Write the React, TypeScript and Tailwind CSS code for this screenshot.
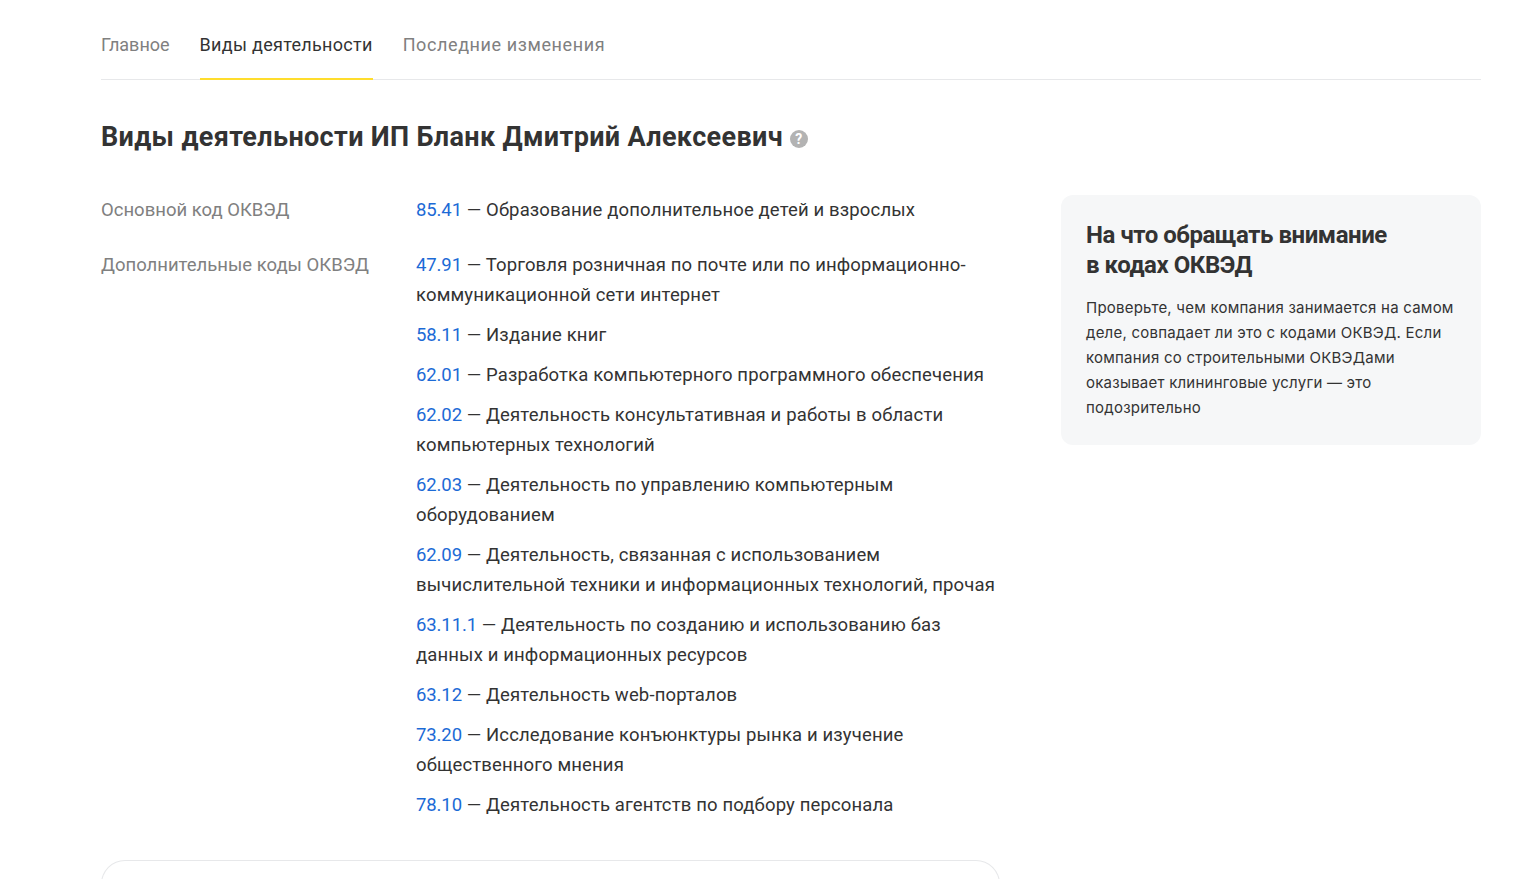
const items: [string, string][] = [
  ["47.91", "Торговля розничная по почте или по информационно-коммуникационной сети интернет"],
  ["58.11", "Издание книг"],
  ["62.01", "Разработка компьютерного программного обеспечения"],
  ["62.02", "Деятельность консультативная и работы в области компьютерных технологий"],
  ["62.03", "Деятельность по управлению компьютерным оборудованием"],
  ["62.09", "Деятельность, связанная с использованием вычислительной техники и информационных технологий, прочая"],
  ["63.11.1", "Деятельность по созданию и использованию баз данных и информационных ресурсов"],
  ["63.12", "Деятельность web-порталов"],
  ["73.20", "Исследование конъюнктуры рынка и изучение общественного мнения"],
  ["78.10", "Деятельность агентств по подбору персонала"],
];

function Code({ code, text }: { code: string; text: string }) {
  return (
    <div className="text-[18.5px] leading-[30px] tracking-[0.14px] text-[#333333]">
      <a className="tracking-[-0.1px] text-[#1c6ad6]">{code}</a> — {text}
    </div>
  );
}

export default function App() {
  return (
    <div className="h-[879px] overflow-hidden bg-white pl-[101px] pr-[51px] font-['Roboto',sans-serif]">
      <nav className="flex h-[80px] gap-[30px] border-b border-[#e7e8ea] text-[18px] text-[#808080]">
        <a className="pt-[31px] leading-[28px]">Главное</a>
        <a className="h-[80px] border-b-2 border-[#ffdd2d] pt-[31px] leading-[28px] tracking-[0.3px] text-[#333333]">Виды деятельности</a>
        <a className="pt-[31px] leading-[28px] tracking-[0.6px]">Последние изменения</a>
      </nav>
      <h2 className="mt-[39px] flex h-[36px] items-center text-[27px] font-bold leading-[36px] tracking-[0.35px] text-[#333333]">
        Виды деятельности ИП Бланк Дмитрий Алексеевич
        <svg className="ml-[7px] mt-[3px]" width="18" height="18" viewBox="0 0 18 18">
          <circle cx="9" cy="9" r="9" fill="#b3b3b3" />
          <text x="9" y="14" textAnchor="middle" fontSize="14" fontWeight="700" fill="#fff">?</text>
        </svg>
      </h2>
      <div className="mt-[40px] flex justify-between">
        <div className="w-[899px]">
          <div className="flex">
            <div className="w-[315px] shrink-0 text-[18.5px] leading-[30px] text-[#808080]">Основной код ОКВЭД</div>
            <div className="w-[584px]"><Code code="85.41" text="Образование дополнительное детей и взрослых" /></div>
          </div>
          <div className="mt-[25px] flex">
            <div className="w-[315px] shrink-0 text-[18.5px] leading-[30px] text-[#808080]">Дополнительные коды ОКВЭД</div>
            <div className="flex w-[584px] flex-col gap-[10px]">
              {items.map(([c, t]) => <Code key={c} code={c} text={t} />)}
            </div>
          </div>
          <div className="mt-[40px] h-[40px] rounded-t-[24px] border border-b-0 border-[#e7e8ea]" />
        </div>
        <aside className="h-[250px] w-[420px] rounded-[12px] bg-[#f6f7f8] px-[25px] pt-[25px] text-[#333333]">
          <h3 className="text-[24px] font-bold leading-[30px] tracking-[-0.45px]">На что обращать внимание<br />в кодах ОКВЭД</h3>
          <p className="mt-[15px] font-['Inter',sans-serif] text-[15px] leading-[25px] tracking-[0.23px]">Проверьте, чем компания занимается на самом деле, совпадает ли это с кодами ОКВЭД. Если компания со строительными ОКВЭДами оказывает клининговые услуги — это подозрительно</p>
        </aside>
      </div>
    </div>
  );
}
